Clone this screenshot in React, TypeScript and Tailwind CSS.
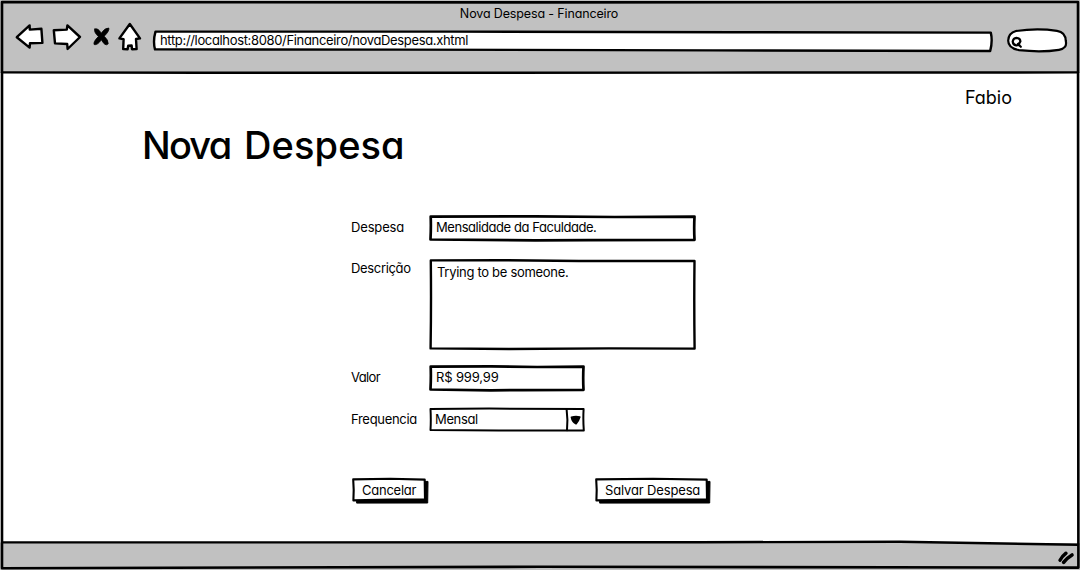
import type { ReactNode } from "react";

function Sketch({ w, h, className = "", children }: { w: number; h: number; className?: string; children: ReactNode }) {
  return (
    <svg
      width={w}
      height={h}
      viewBox={`0 0 ${w} ${h}`}
      fill="none"
      stroke="#000"
      strokeWidth="2.4"
      strokeLinejoin="round"
      strokeLinecap="round"
      aria-hidden="true"
      className={`block shrink-0 overflow-visible ${className}`}
    >
      {children}
    </svg>
  );
}

function Toolbar() {
  return (
    <div className="flex h-[30px] items-center pl-[15px]">
      <button aria-label="Back">
        <Sketch w={28} h={26}>
          <path fill="#fff" d="M1.8 13.2 14.6 1.4 14.8 5.6 26.4 4.8 27.4 18.9 15 19.2 14.6 23.6Z" />
        </Sketch>
      </button>
      <button aria-label="Forward" className="ml-[9px]">
        <Sketch w={28} h={26}>
          <path fill="#fff" d="M1.8 6.2 14.8 5.6 15.4 1.4 28 13 15.6 25 15.2 20 3 19.4Z" />
        </Sketch>
      </button>
      <button aria-label="Stop" className="ml-[13px]">
        <Sketch w={16} h={20}>
          <path fill="#000" strokeWidth="0.8" d="M1.8 2Q5 .6 8.2 6.2 11.8.8 15.8 1 16.6 4 11.2 9.2 15.4 13 15.2 16.8 12.2 20 8.4 12.8 4.4 18.4 1.2 17.6-.2 15 5.4 9.6.4 4.8 1.8 2Z" />
        </Sketch>
      </button>
      <button aria-label="Home" className="ml-[9px]">
        <Sketch w={23} h={28}>
          <path fill="#fff" d="M11.8 1 22 15.4 18 16 18.6 26 14 26.2 13.6 22.5 10.2 22.8 9.6 26.2 5.2 26 5.6 16.2 1.4 15.4Z" />
        </Sketch>
      </button>
      <div className="relative ml-[12px] mt-[8px] flex h-[20px] w-[840px] items-center pl-[7px]">
        <Sketch w={840} h={20} className="absolute inset-0">
          <path fill="#fff" d="M2.5 .6 300 .6 580 1.2 837.8 1.6Q839.8 10 837.2 20L560 19.4 250 18.6 2 18.4Q-.2 10 2.5 .6Z" />
        </Sketch>
        <span className="relative -top-px tracking-[-0.34px]">http://localhost:8080/Financeiro/novaDespesa.xhtml</span>
      </div>
      <div className="relative ml-[14px] mt-[6px] h-[24px] w-[60px]">
        <Sketch w={60} h={24}>
          <path fill="#fff" strokeWidth="2.2" d="M9 3Q30-.2 50 2.8 58.5 4 58.8 13 60.4 20.5 52 21.8 35 24.6 12 22.2 1 20 1.2 12.5 1.5 5 9 3Z" />
          <path strokeWidth="2.2" d="M12.3 16.8 9.1 17.4Q5.9 16.9 5.7 13.4 6.3 10 9.3 9.8 13.3 10 13.4 13.4 12.8 15.4 10.9 16L13.8 18.8" />
        </Sketch>
      </div>
    </div>
  );
}

function Label({ className = "", children }: { className?: string; children: ReactNode }) {
  return <div className={`w-[78px] shrink-0 ${className}`}>{children}</div>;
}

function TextField({ w, children }: { w: 267 | 156; children: ReactNode }) {
  const r = w - 1.5;
  return (
    <div className="relative flex h-[26px] items-center pl-[7px]">
      <Sketch w={w} h={26} className="absolute inset-y-0 left-0">
        <path fill="#fff" strokeWidth="2.7" d={`M1.7 1.6 ${r * 0.4} 1.4 ${r * 0.7} 2 ${r} 1.6Q${r - 0.6} 13 ${r} 24.8L${r * 0.6} 25.1 ${r * 0.4} 25.3 1.5 24.5Q2.1 12 1.7 1.6Z`} />
      </Sketch>
      <span className="relative -top-px">{children}</span>
    </div>
  );
}

function ActionButton({ w, children }: { w: 77 | 116; children: ReactNode }) {
  return (
    <button className="relative flex h-[26px] items-center">
      <Sketch w={w} h={26} className="absolute inset-0">
        <path fill="#000" strokeWidth="1" d={`M5 5 ${w - 1} 3.4 ${w - 1.3} 25 5 25.1Z`} />
        <path fill="#fff" strokeWidth="2.1" d={`M1.2 1.4 ${w * 0.5} .8 ${w - 4.3} 1.6 ${w - 4} 21.4 ${w * 0.5} 21.6 1.4 22.4Q2.1 12 1.2 1.4Z`} />
      </Sketch>
      {children}
    </button>
  );
}

export default function App() {
  return (
    <div className="relative flex h-[570px] w-[1080px] flex-col overflow-hidden bg-white font-['Inter','Noto_Sans',sans-serif] text-[13px] leading-[16px] text-black [font-feature-settings:'cv11'] [font-synthesis:none]">
      <header className="h-[73px] shrink-0 bg-[#c1c1c1] pt-[6px]">
        <div className="pr-[2px] text-center text-[12.5px] leading-[16px]">
          <span className="tracking-[-0.14px]">Nova Despesa - Financeiro</span>
        </div>
        <Toolbar />
      </header>

      <main className="flex-1 pt-[13px]">
        <div className="pr-[68px] text-right text-[18px] leading-[24px]">Fabio</div>
        <h1 className="mt-[13px] pl-[142px] text-[38px] font-medium leading-[44px]">
          <span className="tracking-[-1.8px]">Nova</span>
          <span className="tracking-[3.5px]"> </span>
          <span className="tracking-[0.1px]">Despesa</span>
        </h1>

        <form className="ml-[351px] mt-[48px]">
          <div className="flex">
            <Label className="pt-[4px] tracking-[-0.15px]">Despesa</Label>
            <TextField w={267}>
              <span className="tracking-[-0.44px]">Mensalidade da Faculdade.</span>
            </TextField>
          </div>
          <div className="mt-[18px] flex">
            <Label className="pt-px tracking-[-0.33px]">Descrição</Label>
            <div className="relative h-[91px] w-[267px] pl-[8px] pt-[5px]">
              <Sketch w={267} h={91} className="absolute inset-0">
                <path fill="#fff" d="M1.8 1.4 70 1.2 150 2 265.5 2Q265 45 265.6 89.6L180 89.4 80 90 1.6 89.4Q2.3 45 1.8 1.4Z" />
              </Sketch>
              <span className="relative tracking-[-0.3px]">Trying to be someone.</span>
            </div>
          </div>
          <div className="mt-[15px] flex">
            <Label className="pt-[4px] tracking-[-0.6px]">Valor</Label>
            <TextField w={156}>
              <span className="tracking-[-0.15px]">R$ 999,99</span>
            </TextField>
          </div>
          <div className="mt-[17px] flex">
            <Label className="pt-[3px] tracking-[-0.3px]">Frequencia</Label>
            <div className="relative flex h-[24px] w-[156px] items-center pl-[6px]">
              <Sketch w={156} h={24} className="absolute inset-0">
                <path fill="#fff" strokeWidth="2" d="M1.5 1 60 .6 154.6 1Q154 12 154.8 22.4L70 22.5 1.5 22Q2.1 12 1.5 1Z" />
                <path strokeWidth="2" d="M137.6 1.2Q139 12 138 22.2" />
                <path fill="#000" strokeWidth="1.6" d="M142.4 9.2Q146.6 8.2 150.8 9 149.4 13.5 147 15.8 143.2 14 142.4 9.2Z" />
              </Sketch>
              <span className="relative -top-px tracking-[-0.35px]">Mensal</span>
            </div>
          </div>
          <div className="mt-[46px] flex pl-px">
            <ActionButton w={77}>
              <span className="relative -top-px w-[76px] pl-[10px] text-left tracking-[-0.25px]">Cancelar</span>
            </ActionButton>
            <div className="w-[167px]" />
            <ActionButton w={116}>
              <span className="relative -top-px w-[115px] pl-[10px] text-left tracking-[-0.15px]">Salvar Despesa</span>
            </ActionButton>
          </div>
        </form>
      </main>

      <footer className="flex h-[27px] shrink-0 items-center justify-end bg-[#c1c1c1] pr-[5px]">
        <Sketch w={17} h={14}>
          <path strokeWidth="3.4" d="M2 10.2Q4 6.4 8 3.2" />
          <path strokeWidth="3.6" d="M5.6 12.4Q9 8 14 5" />
        </Sketch>
      </footer>

      <Sketch w={1080} h={570} className="pointer-events-none absolute inset-0">
        <path strokeWidth="2.6" d="M2 2 540 2.4 1078 2Q1077.4 280 1078.4 567.6L540 566.8 2 568.2Q3 280 2 2Z" />
        <path strokeWidth="2.4" d="M2 72.4 200 72.8 700 72.6 1078 72.4" />
        <path strokeWidth="2.4" d="M2 542.4 300 542.4 700 542.2 900 541.8 1078 544.8" />
      </Sketch>
    </div>
  );
}
